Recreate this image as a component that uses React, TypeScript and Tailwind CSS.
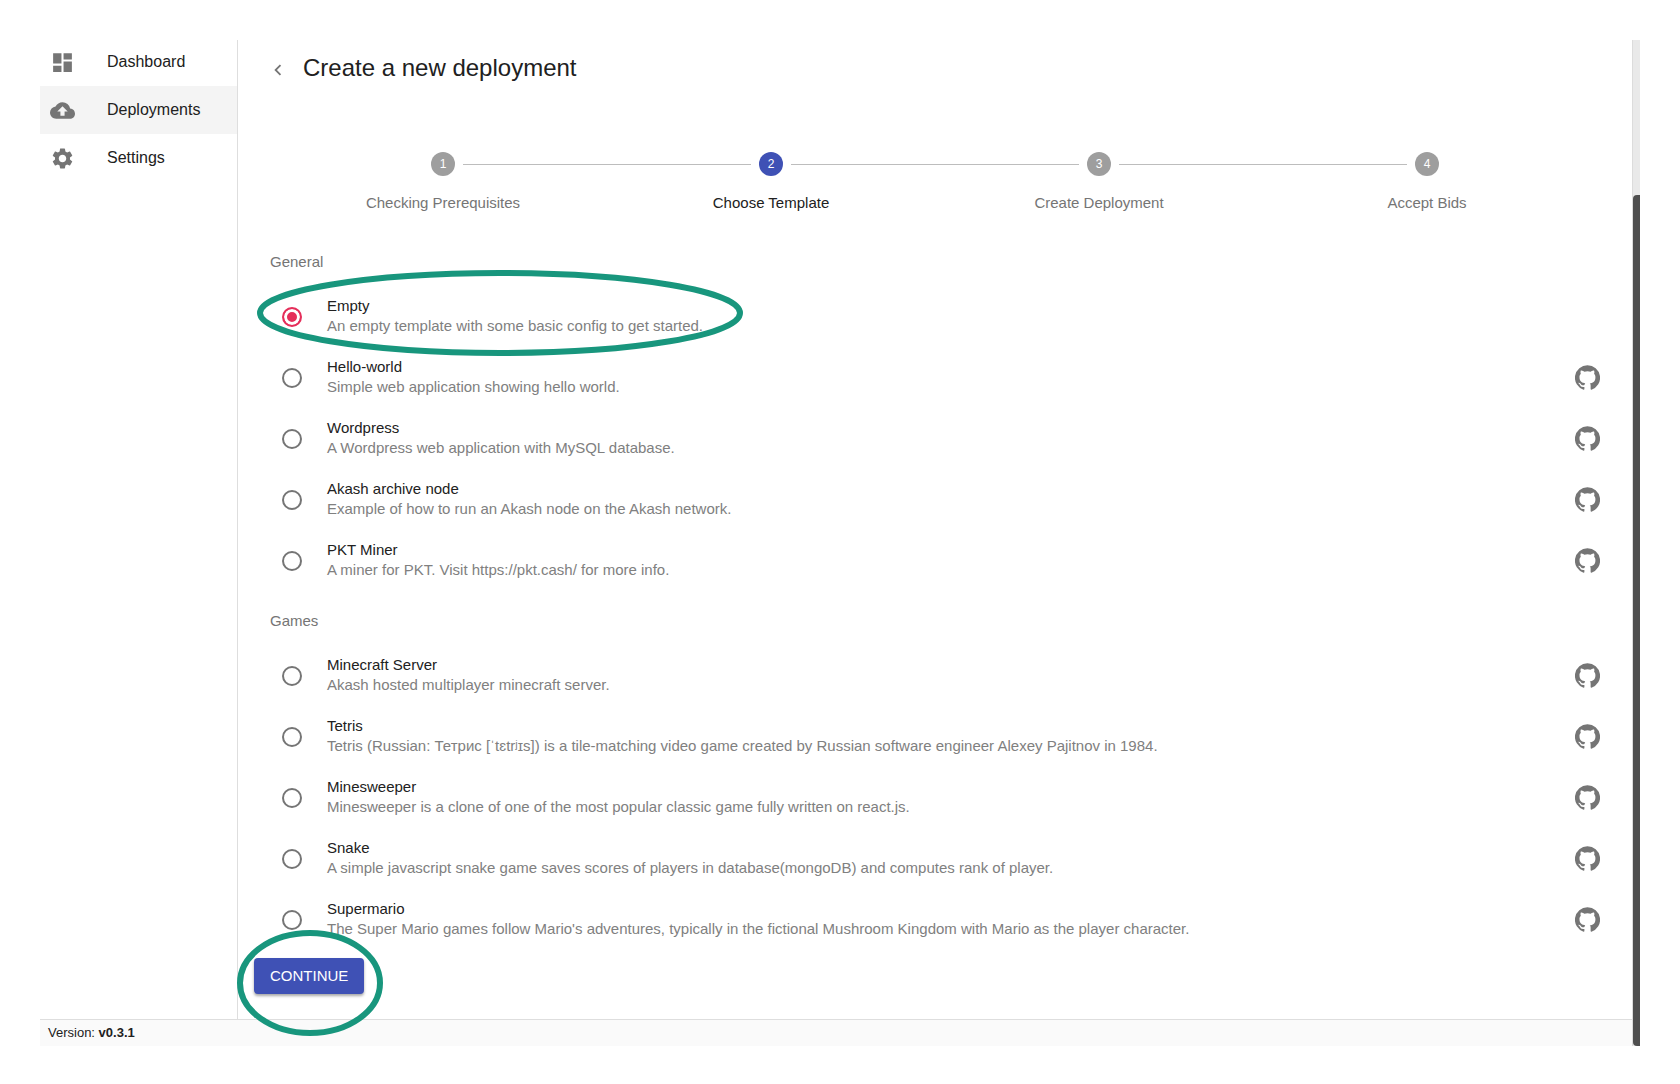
import { useState } from "react";
import { MdBackup, MdChevronLeft, MdDashboard, MdSettings } from "react-icons/md";

const GITHUB_PATH =
  "M12 .3a12 12 0 0 0-3.8 23.4c.6.1.8-.3.8-.6v-2c-3.3.7-4-1.6-4-1.6-.6-1.4-1.4-1.8-1.4-1.8-1-.7.1-.7.1-.7 1.2 0 1.9 1.2 1.9 1.2 1 1.8 2.8 1.3 3.5 1 0-.8.4-1.3.7-1.6-2.7-.3-5.5-1.3-5.5-6 0-1.2.5-2.3 1.3-3.1-.2-.4-.6-1.6 0-3.2 0 0 1-.3 3.4 1.2a11.5 11.5 0 0 1 6 0c2.3-1.5 3.3-1.2 3.3-1.2.6 1.6.2 2.8 0 3.2.9.8 1.3 1.9 1.3 3.2 0 4.6-2.8 5.6-5.5 5.9.5.4.9 1 .9 2.2v3.3c0 .3.1.7.8.6A12 12 0 0 0 12 .3";

type Template = { id: string; title: string; description: string; github: boolean };

const sections: { name: string; templates: Template[] }[] = [
  {
    name: "General",
    templates: [
      { id: "empty", title: "Empty", description: "An empty template with some basic config to get started.", github: false },
      { id: "hello-world", title: "Hello-world", description: "Simple web application showing hello world.", github: true },
      { id: "wordpress", title: "Wordpress", description: "A Wordpress web application with MySQL database.", github: true },
      { id: "akash-node", title: "Akash archive node", description: "Example of how to run an Akash node on the Akash network.", github: true },
      { id: "pkt-miner", title: "PKT Miner", description: "A miner for PKT. Visit https://pkt.cash/ for more info.", github: true },
    ],
  },
  {
    name: "Games",
    templates: [
      { id: "minecraft", title: "Minecraft Server", description: "Akash hosted multiplayer minecraft server.", github: true },
      {
        id: "tetris",
        title: "Tetris",
        description:
          "Tetris (Russian: Тетрис [ˈtɛtrʲɪs]) is a tile-matching video game created by Russian software engineer Alexey Pajitnov in 1984.",
        github: true,
      },
      { id: "minesweeper", title: "Minesweeper", description: "Minesweeper is a clone of one of the most popular classic game fully written on react.js.", github: true },
      { id: "snake", title: "Snake", description: "A simple javascript snake game saves scores of players in database(mongoDB) and computes rank of player.", github: true },
      {
        id: "supermario",
        title: "Supermario",
        description: "The Super Mario games follow Mario's adventures, typically in the fictional Mushroom Kingdom with Mario as the player character.",
        github: true,
      },
    ],
  },
];

const navItems = [
  { label: "Dashboard", icon: MdDashboard, active: false },
  { label: "Deployments", icon: MdBackup, active: true },
  { label: "Settings", icon: MdSettings, active: false },
];

const steps = ["Checking Prerequisites", "Choose Template", "Create Deployment", "Accept Bids"];
const ACTIVE_STEP = 1;

function Sidebar() {
  return (
    <nav className="w-[198px] shrink-0 overflow-hidden border-r border-[#dedede]">
      <ul className="-mt-0.5">
        {navItems.map(({ label, icon: Icon, active }) => (
          <li key={label}>
            <a
              href="#"
              aria-current={active ? "page" : undefined}
              className={`flex h-12 items-center gap-8 pl-2.5 text-base ${active ? "bg-[#f4f4f4]" : ""}`}
            >
              <Icon className="size-[25px] text-[#757575]" />
              {label}
            </a>
          </li>
        ))}
      </ul>
    </nav>
  );
}

function Stepper() {
  return (
    <ol className="flex px-[41px] pt-[68px]">
      {steps.map((step, i) => (
        <li key={step} className="flex flex-1 flex-col items-center gap-[17px]">
          <div className="flex w-full items-center gap-2">
            <span className={`h-px flex-1 ${i > 0 ? "bg-[#bdbdbd]" : ""}`} />
            <span
              className={`flex size-6 items-center justify-center rounded-full text-xs text-white ${
                i === ACTIVE_STEP ? "bg-[#3f51b5]" : "bg-[#9e9e9e]"
              }`}
            >
              {i + 1}
            </span>
            <span className={`h-px flex-1 ${i < steps.length - 1 ? "bg-[#bdbdbd]" : ""}`} />
          </div>
          <span className={`text-[15px]/5 ${i === ACTIVE_STEP ? "text-[#212121]" : "text-[#757575]"}`}>{step}</span>
        </li>
      ))}
    </ol>
  );
}

function TemplateRow({ template, selected, onSelect }: { template: Template; selected: boolean; onSelect: () => void }) {
  return (
    <li className="relative flex h-[61px] items-center pr-4 pl-7">
      <input
        type="radio"
        id={template.id}
        name="template"
        checked={selected}
        onChange={onSelect}
        className="size-5 shrink-0 appearance-none rounded-full border-2 border-[#757575] checked:border-[#e52e5a] checked:bg-[#e52e5a] checked:shadow-[inset_0_0_0_3px_white]"
      />
      <label htmlFor={template.id} className="flex-1 pb-0.5 pl-[25px] text-[15px]/5">
        <span className="block">{template.title}</span>
        <span className="block text-[#808080]">{template.description}</span>
      </label>
      {template.github && (
        <a href="#" aria-label={`${template.title} on GitHub`} className="text-[#757575]">
          <svg viewBox="0 0 24 24" className="size-[25px]" fill="currentColor">
            <path d={GITHUB_PATH} />
          </svg>
        </a>
      )}
      {template.id === "empty" && (
        <svg
          aria-hidden="true"
          viewBox="0 0 486 86"
          className="pointer-events-none absolute -top-4 left-[3px] h-[86px] w-[486px]"
        >
          <ellipse cx="243" cy="43" rx="240" ry="40" fill="none" stroke="#18967d" strokeWidth="6" />
        </svg>
      )}
    </li>
  );
}

export default function App() {
  const [selected, setSelected] = useState("empty");
  return (
    <div className="min-h-screen bg-white p-10 pb-0 font-['Liberation_Sans',Arial,sans-serif] text-[#212121]">
      <div className="flex">
        <div className="min-w-0 flex-1">
          <div className="flex">
            <Sidebar />
            <main className="min-w-0 flex-1 pb-[25px]">
              <header className="flex items-center gap-3.5 pt-3 pl-[29px]">
                <button type="button" aria-label="Back" className="pt-1">
                  <MdChevronLeft className="size-[22px] text-[#757575]" />
                </button>
                <h1 className="text-2xl">Create a new deployment</h1>
              </header>
              <Stepper />
              <div className="flex flex-col gap-1.5 px-4 pt-[25px]">
                {sections.map((section) => (
                  <section key={section.name}>
                    <h2 className="flex h-12 items-center pl-4 text-[15px]/5 text-[#757575]">{section.name}</h2>
                    <ul>
                      {section.templates.map((t) => (
                        <TemplateRow key={t.id} template={t} selected={selected === t.id} onSelect={() => setSelected(t.id)} />
                      ))}
                    </ul>
                  </section>
                ))}
              </div>
              <div className="relative mt-2 ml-4 w-fit">
                <button
                  type="button"
                  className="h-9 rounded bg-[#3f51b5] px-4 text-[15px]/5 text-white shadow-[0_2px_3px_rgba(0,0,0,0.35)]"
                >
                  CONTINUE
                </button>
                <svg
                  aria-hidden="true"
                  viewBox="0 0 146 106"
                  className="pointer-events-none absolute -top-7 -left-[17px] h-[106px] w-[146px] max-w-none"
                >
                  <ellipse cx="73" cy="53" rx="70" ry="50" fill="none" stroke="#18967d" strokeWidth="6" />
                </svg>
              </div>
            </main>
          </div>
          <footer className="flex h-[27px] items-center border-t border-[#dedede] bg-[#fafafa] pl-2 text-[13px]/5">
            <p>
              Version: <strong>v0.3.1</strong>
            </p>
          </footer>
        </div>
        <div aria-hidden="true" className="flex w-2 flex-col border-l border-[#dcdcdc] bg-[#e9e9e9]">
          <div className="h-[155px]" />
          <div className="flex-1 rounded-l bg-[#4f4f4f]" />
        </div>
      </div>
    </div>
  );
}
